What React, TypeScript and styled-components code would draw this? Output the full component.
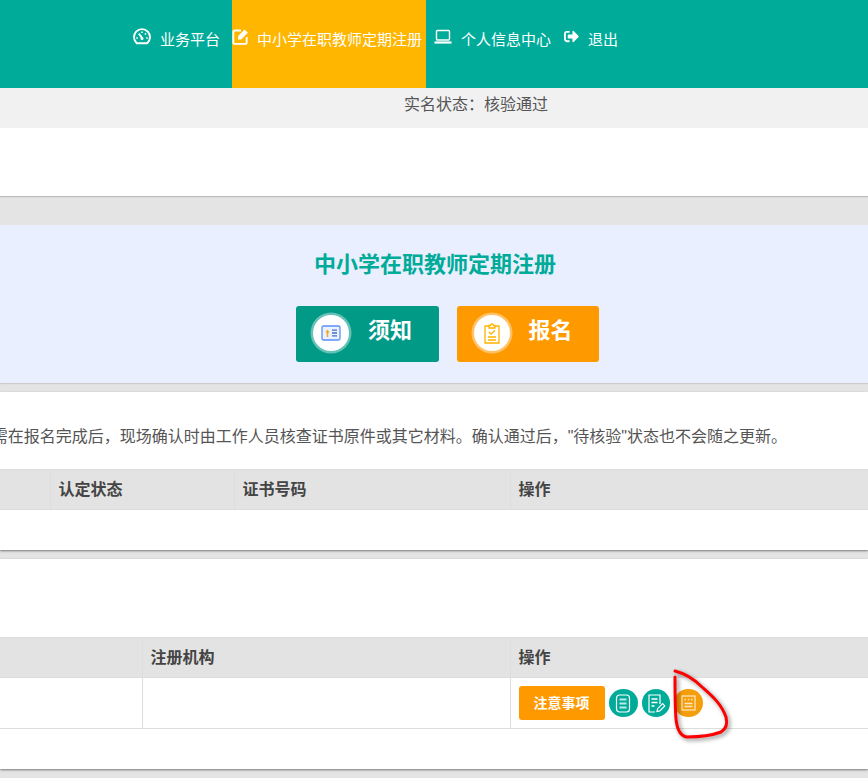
import React from "react"
import styled, { createGlobalStyle } from "styled-components"
import { FaSignOutAlt } from "react-icons/fa"

const GlobalStyle = createGlobalStyle`
  html, body {
    margin: 0;
    padding: 0;
    background: #e4e4e4;
  }
  body {
    font-family: "Liberation Sans", "Noto Sans CJK SC", sans-serif;
    color: #555;
  }
`

function GaugeIcon() {
  return (
    <svg width="18" height="17" viewBox="0 0 18 17" fill="none" stroke="#fff">
      <path d="M3.8 15.2 A8 8 0 1 1 14.2 15.2 Z" strokeWidth="1.9" strokeLinejoin="round" />
      <path d="M9.4 10.4 L5.8 5.6" strokeWidth="1.8" />
      <circle cx="9" cy="10.4" r="1.5" fill="#fff" stroke="none" />
      <path d="M3.2 10h1.6M13.2 10h1.6M9 3.4v1.6M13 5.4l-1.1 1.1" strokeWidth="1.5" />
    </svg>
  )
}

function EditIcon() {
  return (
    <svg width="18" height="17" viewBox="0 0 18 17" fill="none">
      <path
        d="M9 2.5H3A1.7 1.7 0 0 0 1.3 4.2v10A1.7 1.7 0 0 0 3 15.9h10a1.7 1.7 0 0 0 1.7-1.7V9"
        stroke="#fff"
        strokeWidth="1.9"
      />
      <path d="M6 8.2 12.6 1.6 15.8 4.8 9.2 11.4H6Z" fill="#fff" />
    </svg>
  )
}

function LaptopIcon() {
  return (
    <svg width="18" height="15" viewBox="0 0 18 15" fill="none" stroke="#fff">
      <rect x="2.5" y="1.5" width="13" height="9.5" rx="1" strokeWidth="1.4" />
      <path d="M0.5 13.5h17" strokeWidth="2.2" />
    </svg>
  )
}

function NoticeIcon() {
  return (
    <svg width="20" height="16" viewBox="0 0 20 16" fill="none">
      <rect x="1" y="1" width="18" height="14" rx="1.5" fill="#eaf1ff" stroke="#5b8ff9" strokeWidth="1.3" />
      <path d="M6.5 12V6" stroke="#f5a623" strokeWidth="1.5" />
      <path d="M4.3 7.5 6.5 4.6 8.7 7.5" fill="#f5a623" />
      <path d="M11 5.2h5M11 8h5M11 10.8h5" stroke="#4a6fc0" strokeWidth="1.3" />
    </svg>
  )
}

function ClipboardIcon() {
  return (
    <svg width="16" height="21" viewBox="0 0 16 21" fill="none" stroke="#ffb300" strokeWidth="1.3">
      <path d="M5 3H1v17h14V3h-4" />
      <path d="M5 5V2.5h1.5a1.5 1.5 0 0 1 3 0H11V5Z" />
      <path d="M5 9l2 2 4-3.5" />
      <path d="M4 14h8M4 17h8" />
    </svg>
  )
}

function ListDocIcon() {
  return (
    <svg width="16" height="19" viewBox="0 0 16 19" fill="none" stroke="#fff">
      <rect x="1.5" y="1" width="13" height="17" rx="3" strokeWidth="1.2" />
      <path d="M4.5 5.5h7M4.5 9.5h7M4.5 13.5h7" strokeWidth="2" stroke="#b9ece5" />
    </svg>
  )
}

function EditDocIcon() {
  return (
    <svg width="20" height="19" viewBox="0 0 20 19" fill="none" stroke="#fff" strokeWidth="1.2">
      <path d="M9 18H3V1h11v9" />
      <path d="M5.5 5h6M5.5 8.5h6M5.5 12h3" strokeWidth="1.5" />
      <path d="M11 17.5l.6-2.8 5-5 2.2 2.2-5 5Z" />
    </svg>
  )
}

function FormIcon() {
  return (
    <svg width="15" height="16" viewBox="0 0 15 16" fill="none" stroke="#ffe9c4">
      <rect x="1" y="1" width="13" height="14" strokeWidth="1.2" />
      <path d="M3.5 4.5h1.5M6.8 4.5h1.5M10 4.5h1.5" strokeWidth="1.5" />
      <path d="M3.5 8.5h8M3.5 11.5h8" strokeWidth="1.5" />
    </svg>
  )
}

function App() {
  return (
    <Page>
      <GlobalStyle />
      <TopBar>
        <NavItem>
          <GaugeIcon />
          <span>业务平台</span>
        </NavItem>
        <NavItem $active>
          <EditIcon />
          <span>中小学在职教师定期注册</span>
        </NavItem>
        <NavItem>
          <LaptopIcon />
          <span>个人信息中心</span>
        </NavItem>
        <NavItem>
          <FaSignOutAlt size={15} />
          <span>退出</span>
        </NavItem>
      </TopBar>

      <StatusBar>实名状态：核验通过</StatusBar>
      <BlankPanel />

      <SignPanel>
        <SignTitle>中小学在职教师定期注册</SignTitle>
        <SignActions>
          <SignButton $color="#009a87" $halo="rgba(255, 255, 255, 0.4)">
            <IconBadge>
              <NoticeIcon />
            </IconBadge>
            须知
          </SignButton>
          <SignButton $color="#ff9900" $halo="rgba(255, 255, 255, 0.4)">
            <IconBadge>
              <ClipboardIcon />
            </IconBadge>
            报名
          </SignButton>
        </SignActions>
      </SignPanel>

      <Panel>
        <Note>
          <span>需在报名完成后，现场确认时由工作人员核查证书原件或其它材料。确认通过后，"待核验"状态也不会随之更新。</span>
        </Note>
        <Table $columns="51px 184px 276px 1fr">
          <HeadCell />
          <HeadCell>认定状态</HeadCell>
          <HeadCell>证书号码</HeadCell>
          <HeadCell>操作</HeadCell>
        </Table>
        <EmptyRow $height={40} />
      </Panel>

      <Panel>
        <Spacer />
        <Table $columns="143px 368px 1fr">
          <HeadCell />
          <HeadCell>注册机构</HeadCell>
          <HeadCell>操作</HeadCell>
          <BodyCell />
          <BodyCell />
          <BodyCell>
            <NoticeButton>注意事项</NoticeButton>
            <RoundButton $color="#00ab99">
              <ListDocIcon />
            </RoundButton>
            <RoundButton $color="#00ab99">
              <EditDocIcon />
            </RoundButton>
            <RoundButton $color="#f59e0b">
              <FormIcon />
            </RoundButton>
          </BodyCell>
        </Table>
        <EmptyRow $height={40} />
      </Panel>

      <Scribble width="70" height="80" viewBox="0 0 70 80" fill="none">
        <path
          d="M6 2 C14 4 24 9 33 18 C42 26 52 34 57 48 C59 56 57 60 52 63 C44 66 30 68 18 68 C11 67 8 60 7 50 C6 38 6 20 6 8"
          stroke="#ff0000"
          strokeWidth="3"
          strokeLinecap="round"
        />
      </Scribble>
    </Page>
  )
}

const Page = styled.div`
  position: relative;
  width: 868px;
  height: 778px;
  overflow: hidden;
  background: #e4e4e4;
`

const TopBar = styled.nav`
  display: flex;
  height: 88px;
  padding-left: 125px;
  background: #00ab99;
`

const NavItem = styled.a<{ $active?: boolean }>`
  display: flex;
  align-items: center;
  gap: ${(p) => (p.$active ? "7px" : "9px")};
  box-sizing: border-box;
  height: 88px;
  margin-left: ${(p) => (p.$active ? "7px" : "0")};
  padding: ${(p) => (p.$active ? "0 4px 12px 0" : "0 5px 12px 8px")};
  font-size: 15px;
  color: #fff;
  white-space: nowrap;
  background: ${(p) => (p.$active ? "#ffb600" : "transparent")};

  svg {
    flex-shrink: 0;
    margin-top: -3px;
  }
`

const StatusBar = styled.div`
  height: 40px;
  padding-left: 404px;
  font-size: 16px;
  line-height: 33px;
  color: #555;
  background: #f1f1f1;
`

const BlankPanel = styled.div`
  height: 68px;
  margin-bottom: 29px;
  background: #fff;
  box-shadow: 0 1px 1px #bbb;
`

const SignPanel = styled.section`
  box-sizing: border-box;
  height: 158px;
  margin-bottom: 9px;
  padding: 22px 0 0 2px;
  background: #e9effe;
  box-shadow: 0 1px 1px #ccc;
`

const SignTitle = styled.h2`
  margin: 0;
  font-size: 22px;
  font-weight: 700;
  line-height: 36px;
  text-align: center;
  color: #00ab99;
`

const SignActions = styled.div`
  display: flex;
  justify-content: center;
  gap: 18px;
  margin: 23px 0 0 25px;
`

const SignButton = styled.a<{ $color: string; $halo: string }>`
  display: flex;
  align-items: center;
  gap: 19px;
  box-sizing: border-box;
  width: 142.5px;
  height: 56px;
  padding: 0 0 12px 15px;
  font-size: 22px;
  font-weight: 700;
  color: #fff;
  background: ${(p) => p.$color};
  border-radius: 3px;

  span {
    box-shadow: 0 0 0 2.5px ${(p) => p.$halo};
  }
`

const IconBadge = styled.span`
  display: flex;
  align-items: center;
  justify-content: center;
  width: 36px;
  height: 36px;
  margin: 10px 0 0 2px;
  background: #fff;
  border-radius: 50%;
`

const Panel = styled.section`
  margin-bottom: 9px;
  background: #fff;
  box-shadow: 0 1px 2px #777;
`

const Note = styled.p`
  display: flex;
  justify-content: flex-end;
  overflow: hidden;
  box-sizing: border-box;
  height: 77px;
  margin: 0;
  padding: 30px 81px 0 0;
  font-size: 16px;
  line-height: 30px;
  white-space: nowrap;
  color: #555;
`

const Spacer = styled.div`
  height: 78px;
`

const Table = styled.div<{ $columns: string }>`
  display: grid;
  grid-template-columns: ${(p) => p.$columns};
  margin-left: -1px;
`

const HeadCell = styled.div`
  box-sizing: border-box;
  height: 41px;
  padding-left: 7.5px;
  font-size: 16px;
  font-weight: 700;
  line-height: 39px;
  color: #444;
  background: #e3e3e3;
  border-top: 1px solid #ddd;
  border-bottom: 1px solid #ddd;
  border-left: 1px solid #ddd;
`

const BodyCell = styled.div`
  display: flex;
  align-items: center;
  gap: 4px;
  box-sizing: border-box;
  height: 51px;
  padding-left: 8px;
  border-bottom: 1px solid #ddd;
  border-left: 1px solid #ddd;
`

const EmptyRow = styled.div<{ $height: number }>`
  height: ${(p) => p.$height}px;
`

const NoticeButton = styled.a`
  box-sizing: border-box;
  width: 86px;
  height: 34px;
  padding-right: 1px;
  font-size: 14px;
  font-weight: 700;
  line-height: 34px;
  text-align: center;
  color: #fff;
  background: #ff9900;
  border-radius: 3px;
`

const RoundButton = styled.a<{ $color: string }>`
  display: flex;
  align-items: center;
  justify-content: center;
  width: 28.5px;
  height: 28px;
  background: ${(p) => p.$color};
  border-radius: 50%;
`

const Scribble = styled.svg`
  position: absolute;
  top: 669px;
  left: 669px;
  overflow: visible;
  filter: drop-shadow(2px 2px 2px rgba(0, 0, 0, 0.45));
`

export default App
